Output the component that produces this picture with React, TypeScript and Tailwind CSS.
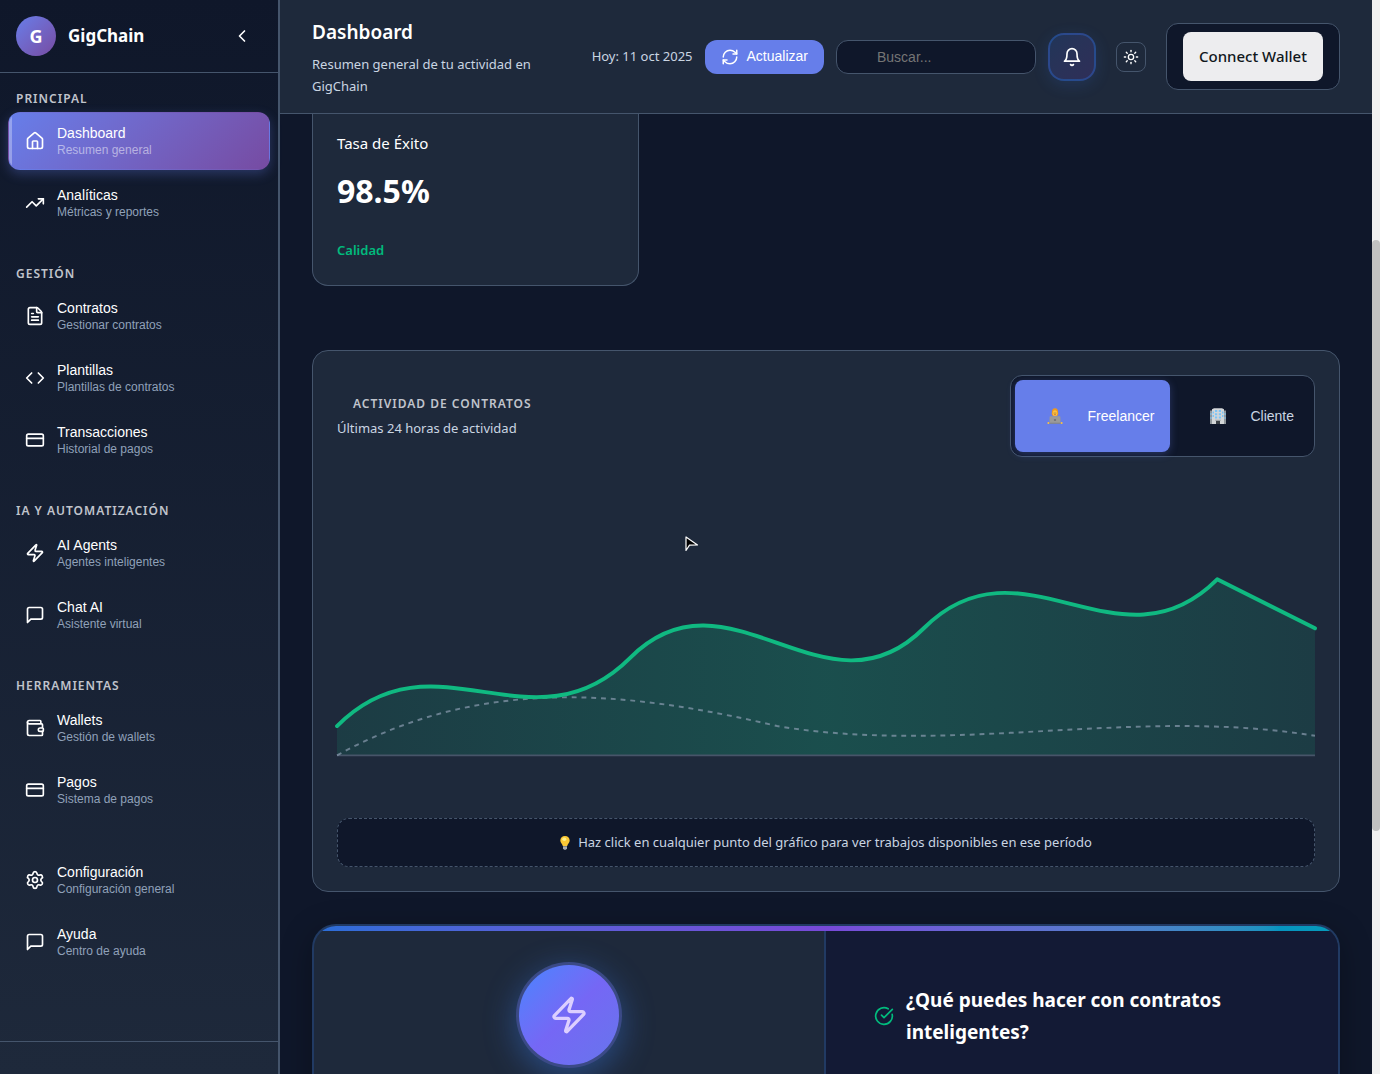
import type { ComponentType, ReactNode } from "react";
import {
  ChevronLeft,
  CircleCheckBig,
  Code,
  CreditCard,
  FileText,
  House,
  RefreshCw,
  Settings,
  Sun,
  TrendingUp,
  Wallet,
  Zap,
} from "lucide-react";

type IconProps = { size?: number; className?: string };
type Item = { icon: ComponentType<IconProps>; title: string; sub: string; active?: boolean };
type Section = { label?: string; items: Item[] };

function Glyph({ size = 20, className, children }: IconProps & { children: ReactNode }) {
  return (
    <svg
      width={size}
      height={size}
      viewBox="0 0 24 24"
      fill="none"
      stroke="currentColor"
      strokeWidth="2"
      strokeLinecap="round"
      strokeLinejoin="round"
      className={className}
      aria-hidden="true"
    >
      {children}
    </svg>
  );
}

function Message(props: IconProps) {
  return (
    <Glyph {...props}>
      <path d="M21 15a2 2 0 0 1-2 2H7l-4 4V5a2 2 0 0 1 2-2h14a2 2 0 0 1 2 2z" />
    </Glyph>
  );
}

function Bell(props: IconProps) {
  return (
    <Glyph {...props}>
      <path d="M6 8a6 6 0 0 1 12 0c0 7 3 9 3 9H3s3-2 3-9" />
      <path d="M10.300 21a1.940 1.940 0 0 0 3.400 0" />
    </Glyph>
  );
}

const sections: Section[] = [
  {
    label: "PRINCIPAL",
    items: [
      { icon: House, title: "Dashboard", sub: "Resumen general", active: true },
      { icon: TrendingUp, title: "Analíticas", sub: "Métricas y reportes" },
    ],
  },
  {
    label: "GESTIÓN",
    items: [
      { icon: FileText, title: "Contratos", sub: "Gestionar contratos" },
      { icon: Code, title: "Plantillas", sub: "Plantillas de contratos" },
      { icon: CreditCard, title: "Transacciones", sub: "Historial de pagos" },
    ],
  },
  {
    label: "IA Y AUTOMATIZACIÓN",
    items: [
      { icon: Zap, title: "AI Agents", sub: "Agentes inteligentes" },
      { icon: Message, title: "Chat AI", sub: "Asistente virtual" },
    ],
  },
  {
    label: "HERRAMIENTAS",
    items: [
      { icon: Wallet, title: "Wallets", sub: "Gestión de wallets" },
      { icon: CreditCard, title: "Pagos", sub: "Sistema de pagos" },
    ],
  },
  {
    items: [
      { icon: Settings, title: "Configuración", sub: "Configuración general" },
      { icon: Message, title: "Ayuda", sub: "Centro de ayuda" },
    ],
  },
];

function NavItem({ icon: Icon, title, sub, active }: Item) {
  return (
    <button
      type="button"
      className={
        "relative flex h-[58px] w-full items-center gap-3 overflow-hidden rounded-xl border border-transparent px-4 text-left font-['Liberation_Sans',sans-serif] text-white " +
        (active ? "bg-linear-135 from-[#667eea] to-[#764ba2] shadow-[0_4px_12px_rgba(102,126,234,0.3)]" : "")
      }
    >
      {active && <span className="absolute inset-y-0 left-0 w-[3px] bg-white/30" />}
      <Icon size={20} className="shrink-0" />
      <span className="flex flex-col">
        <span className="text-[14px] leading-[17px] font-medium">{title}</span>
        <span className={active ? "text-xs text-white/50" : "text-xs text-slate-400"}>{sub}</span>
      </span>
    </button>
  );
}

function Sidebar() {
  return (
    <aside className="flex w-[280px] shrink-0 flex-col border-r-2 border-slate-600 bg-linear-to-b from-[#0f172a] to-[#1e293b]">
      <div className="flex items-center gap-3 border-b border-slate-600 p-4">
        <div className="flex size-10 items-center justify-center rounded-full bg-linear-135 from-[#667eea] to-[#764ba2] text-lg font-bold">
          G
        </div>
        <span className="flex-1 text-[17px] leading-7 font-bold">GigChain</span>
        <button type="button" aria-label="Contraer menú" className="flex size-10 items-center justify-center">
          <ChevronLeft size={20} />
        </button>
      </div>
      <nav className="flex flex-1 flex-col gap-8 px-2 pt-4">
        {sections.map((s, i) => (
          <div key={i}>
            {s.label && (
              <h3 className="mb-1 px-2 text-xs leading-[19px] font-semibold tracking-[1px] text-[#c0c4cc]">
                {s.label}
              </h3>
            )}
            <div className="flex flex-col gap-1">
              {s.items.map((it) => (
                <NavItem key={it.title} {...it} />
              ))}
            </div>
          </div>
        ))}
      </nav>
      <div className="h-[33px] border-t border-slate-600" />
    </aside>
  );
}

function Header() {
  return (
    <header className="z-10 flex items-center gap-8 border-b border-slate-600 bg-[#1e293b] px-8 py-4">
      <div className="min-w-0 flex-1">
        <h1 className="mb-1 text-[19px] leading-[33px] font-semibold">Dashboard</h1>
        <p className="text-[13px] leading-[22px] text-slate-300">Resumen general de tu actividad en GigChain</p>
      </div>
      <div className="flex shrink-0 items-center gap-3">
        <span className="text-[13px] text-slate-300">Hoy: 11 oct 2025</span>
        <button
          type="button"
          className="flex h-[34px] items-center gap-2 rounded-xl bg-[#667eea] px-4 font-['Liberation_Sans',sans-serif] text-[14px] font-medium"
        >
          <RefreshCw size={18} />
          Actualizar
        </button>
        <input
          type="search"
          aria-label="Buscar"
          placeholder="Buscar..."
          className="h-[34px] w-[200px] rounded-xl border border-slate-600 bg-[#0f172a] pr-4 pl-10 font-['Liberation_Sans',sans-serif] text-[14px] placeholder:text-[#757575]"
        />
        <button
          type="button"
          aria-label="Notificaciones"
          className="flex size-12 items-center justify-center rounded-2xl border-2 border-blue-500/30 bg-linear-135 from-blue-500/15 to-violet-500/15 shadow-[0_4px_16px_rgba(59,130,246,0.15)]"
        >
          <Bell size={20} />
        </button>
        <button
          type="button"
          aria-label="Cambiar tema"
          className="mx-2 flex size-[30px] items-center justify-center rounded-lg border border-slate-600"
        >
          <Sun size={16} />
        </button>
        <div className="rounded-xl border border-slate-600 bg-[#0f172a] px-4 py-2">
          <button type="button" className="h-[49px] w-[140px] rounded-lg bg-[#ededef] text-[15px] font-medium text-[#11181c]">
            Connect Wallet
          </button>
        </div>
      </div>
    </header>
  );
}

function Technologist() {
  return (
    <svg width="16" height="16" viewBox="0 0 16 16" aria-hidden="true">
      <path d="M2.500 13c0-3 2-4.600 5.500-4.600s5.500 1.600 5.500 4.600z" fill="#8a9099" />
      <path d="M4.800 5.200C4.800 2 5.800 .2 8 .2s3.200 1.800 3.200 5c0 1.400-.5 2.300-1 2.600H5.800c-.5-.3-1-1.200-1-2.600z" fill="#f09a1a" />
      <ellipse cx="8" cy="5.300" rx="2.300" ry="3" fill="#fcc243" />
      <circle cx="7.100" cy="5" r=".45" fill="#5c4020" />
      <circle cx="8.900" cy="5" r=".45" fill="#5c4020" />
      <path d="M7.200 6.700h1.600" stroke="#c0392b" strokeWidth=".7" />
      <rect x="2.600" y="8.300" width="10.800" height="7" rx=".7" fill="#9a9a9a" />
      <circle cx="8" cy="12" r="1.100" fill="#6d6d75" />
      <rect x="1.500" y="14.700" width="13" height="1.100" fill="#858585" />
      <circle cx="1.400" cy="14.900" r="1" fill="#fcc243" />
      <circle cx="14.600" cy="14.900" r="1" fill="#fcc243" />
    </svg>
  );
}

function Building() {
  return (
    <svg width="16" height="16" viewBox="0 0 16 16" aria-hidden="true">
      <path d="M0 2.500h2V16H0zM14 2.500h2V16h-2z" fill="#8f969b" />
      <path d="M2 1.200 4 .2h8l2 1V16H2z" fill="#d3d6d8" />
      <path
        d="M5 2h2.200v2H5zM8.800 2H11v2H8.800zM5 5.200h2.200v2H5zM8.800 5.200H11v2H8.800zM5 8.400h2.200v2H5zM8.800 8.400H11v2H8.800zM12 3.500h1.500v2H12zM12 7h1.500v2H12zM2.500 3.500H4v2H2.500zM2.500 7H4v2H2.500zM.5 5h1v2h-1zM14.500 5h1v2h-1zM.5 9h1v2h-1zM14.500 9h1v2h-1z"
        fill="#7cc4f5"
      />
      <path d="M6 12.500h4V16H6z" fill="#3b4046" />
      <path d="M5 11.700h6v1H5z" fill="#a7adb1" />
    </svg>
  );
}

function Bulb() {
  return (
    <svg width="10" height="14" viewBox="0 0 10 14" aria-hidden="true">
      <path d="M5 0C2.200 0 .3 2 .3 4.500c0 2.300 2 3.300 2.500 5.500h4.400c.5-2.200 2.500-3.200 2.500-5.500C9.700 2 7.800 0 5 0z" fill="#fcc935" />
      <ellipse cx="4.300" cy="3.200" rx="2" ry="1.700" fill="#fff08a" />
      <path d="M3 10.200h4v2L6 13.800H4l-1-1.600z" fill="#a9adb0" />
    </svg>
  );
}

function RoleButton({ icon, label, active }: { icon: ReactNode; label: string; active?: boolean }) {
  return (
    <button
      type="button"
      aria-pressed={!!active}
      className={
        "flex h-[72px] items-center gap-2 rounded-lg px-4 font-['Liberation_Sans',sans-serif] text-[14px] font-medium " +
        (active ? "bg-[#667eea] text-white shadow-[0_2px_8px_rgba(102,126,234,0.3)]" : "text-slate-300")
      }
    >
      <span className="px-4">{icon}</span>
      {label}
    </button>
  );
}

function ActivityChart() {
  const curve = "M0,270 C100,170 200,300 300,200 S500,270 600,170 S800,220 900,120 L1000,170";
  return (
    <svg viewBox="0 0 1000 302" className="mt-[5px] w-full overflow-visible" role="img" aria-label="Actividad de contratos">
      <defs>
        <linearGradient id="area" x1="0" x2="1" y1="0" y2="0">
          <stop offset="0" stopColor="#10b981" stopOpacity="0.13" />
          <stop offset="0.5" stopColor="#10b981" stopOpacity="0.26" />
          <stop offset="1" stopColor="#10b981" stopOpacity="0.13" />
        </linearGradient>
      </defs>
      <path d={curve + " V300 H0 Z"} fill="url(#area)" />
      <path d="M0,300 H1000" stroke="#475569" strokeWidth="2" />
      <path
        d="M0,300 C150,217 300,235 450,270 C633,300 817,250 1000,280"
        fill="none"
        stroke="#94a3b8"
        strokeOpacity="0.65"
        strokeWidth="2"
        strokeDasharray="5 5"
      />
      <path d={curve} fill="none" stroke="#10b981" strokeWidth="4" strokeLinecap="round" strokeLinejoin="round" />
    </svg>
  );
}

export default function App() {
  return (
    <div className="relative flex h-screen overflow-hidden bg-[#0f172a] font-['Noto_Sans',sans-serif] text-white">
      <Sidebar />
      <div className="flex min-w-0 flex-1 flex-col">
        <Header />
        <main className="flex flex-col px-8">
          <div className="grid grid-cols-3 gap-6">
            <section className="flex flex-col rounded-b-2xl border border-t-0 border-slate-600 bg-[#1e293b] px-6 pt-4 pb-6">
              <h2 className="text-[15px] leading-[26px]">Tasa de Éxito</h2>
              <p className="mt-[11px] text-[32px] leading-[48px] font-bold">98.5%</p>
              <p className="mt-6 text-[13px] leading-[22px] font-semibold text-emerald-500">Calidad</p>
            </section>
          </div>

          <section className="mt-16 rounded-2xl border border-slate-600 bg-[#1e293b] p-6">
            <div className="flex items-center justify-between">
              <div>
                <h2 className="px-4 text-xs leading-6 font-semibold tracking-[1px] text-[#c0c4cc]">
                  ACTIVIDAD DE CONTRATOS
                </h2>
                <p className="text-[13px] leading-6 text-slate-300">Últimas 24 horas de actividad</p>
              </div>
              <div className="flex gap-2 rounded-xl border border-slate-600 bg-[#0f172a] p-1">
                <RoleButton icon={<Technologist />} label="Freelancer" active />
                <RoleButton icon={<Building />} label="Cliente" />
              </div>
            </div>
            <ActivityChart />
            <div className="mt-[61px] flex h-[49px] items-center justify-center gap-2 rounded-xl border border-dashed border-slate-600 bg-[#0f172a] text-[13px] text-slate-300">
              <Bulb />
              <p>Haz click en cualquier punto del gráfico para ver trabajos disponibles en ese período</p>
            </div>
          </section>

          <section className="mt-8 h-[480px] shrink-0 overflow-hidden rounded-3xl border-2 border-blue-500/20 bg-[#1e293b] shadow-[0_8px_32px_rgba(0,0,0,0.3)]">
            <div className="h-[5px] bg-linear-to-r from-blue-500 via-violet-500 to-cyan-500 opacity-80" />
            <div className="grid h-full grid-cols-2">
              <div className="flex justify-center border-r-2 border-blue-500/20 pt-[31px]">
                <div className="flex size-[106px] items-center justify-center rounded-full bg-[#3b4a86] shadow-[0_8px_32px_rgba(59,130,246,0.4)]">
                  <div className="flex size-[100px] items-center justify-center rounded-full bg-linear-135 from-[#4285ff] via-[#7567f5] to-[#6675ec]">
                    <Zap size={40} className="text-[#dccfff]" />
                  </div>
                </div>
              </div>
              <div className="bg-[#131a35] px-12 pt-[53px]">
                <div className="flex items-center gap-3">
                  <CircleCheckBig size={20} className="shrink-0 text-emerald-500" />
                  <h2 className="text-[19px] leading-8 font-bold">¿Qué puedes hacer con contratos inteligentes?</h2>
                </div>
              </div>
            </div>
          </section>
        </main>
      </div>
      <div className="flex w-2 shrink-0 flex-col bg-[#f1f1f1] pt-[240px]">
        <div className="h-[591px] rounded-full bg-[#c1c1c1]" />
      </div>
      <svg className="absolute top-[536px] left-[685px]" width="14" height="17" viewBox="0 0 14 17" aria-hidden="true">
        <path d="M1 1v13.500l3.500-5.300 8-.2z" fill="#000" stroke="#fff" strokeWidth="1.200" strokeLinejoin="round" />
      </svg>
    </div>
  );
}
